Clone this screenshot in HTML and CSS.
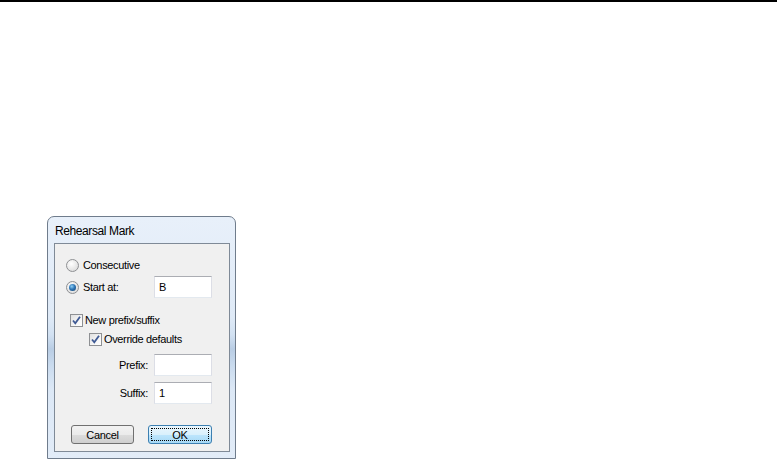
FILE: index.html
```html
<!DOCTYPE html>
<html>
<head>
<meta charset="utf-8">
<link rel="stylesheet" href="styles.css">
</head>
<body>
<div class="topline"></div>
<div class="dialog">
  <div class="title">Rehearsal Mark</div>
  <div class="client">
    <div class="row r1"><span class="radio"></span><span class="lbl">Consecutive</span></div>
    <div class="row r2">
      <div class="opt"><span class="radio on"></span><span class="lbl">Start at:</span></div>
      <span class="field">B</span>
    </div>
    <div class="row r3"><span class="check"><svg width="11" height="11" viewBox="0 0 11 11"><path d="M2 5.5 L4.3 8.3 L9 1.8" fill="none" stroke="#3f5a94" stroke-width="1.8"/></svg></span><span class="lbl">New prefix/suffix</span></div>
    <div class="row r4"><span class="check"><svg width="11" height="11" viewBox="0 0 11 11"><path d="M2 5.5 L4.3 8.3 L9 1.8" fill="none" stroke="#3f5a94" stroke-width="1.8"/></svg></span><span class="lbl">Override defaults</span></div>
    <div class="row r5"><span class="plabel">Prefix:</span><span class="field"></span></div>
    <div class="row r6"><span class="plabel">Suffix:</span><span class="field">1</span></div>
    <div class="buttons">
      <span class="btn">Cancel</span>
      <span class="btn ok"><span class="focus">OK</span></span>
    </div>
  </div>
</div>
</body>
</html>
```

FILE: styles.css
```css
html, body {
  margin: 0;
  padding: 0;
  background: #ffffff;
}
body {
  width: 783px;
  height: 459px;
  overflow: hidden;
  font-family: "Liberation Sans", Arial, sans-serif;
  font-size: 11px;
  color: #000;
}
.topline {
  width: 777px;
  height: 2px;
  background: #000;
}
.dialog {
  box-sizing: border-box;
  width: 189px;
  height: 243px;
  margin: 214px 0 0 47px;
  border: 1px solid #6f7c8c;
  border-radius: 7px 7px 0 0;
  padding: 0 5px 0 6px;
  background: linear-gradient(to bottom, #e8f0fa 0px, #dfeaf7 100px, #d2e1f2 118px, #b9cde4 132px, #cbdcef 150px, #dce8f6 172px, #e2ecf8 243px);
  display: flex;
  flex-direction: column;
}
.title {
  height: 26px;
  line-height: 26px;
  padding: 1px 0 0 1px;
  box-sizing: border-box;
  font-size: 12px;
  letter-spacing: -0.4px;
  color: #000;
}
.client {
  box-sizing: border-box;
  width: 176px;
  height: 209px;
  border: 1px solid #7f8a97;
  background: #f0f0f0;
  display: flex;
  flex-direction: column;
  padding: 12px 0 0 0;
}
.row {
  display: flex;
  align-items: center;
}
.lbl {
  letter-spacing: -0.35px;
}
.r1 {
  height: 18px;
  padding-left: 11px;
}
.r2 {
  height: 22px;
  margin-top: 2px;
}
.opt {
  display: flex;
  align-items: center;
  width: 99px;
  padding-left: 11px;
  box-sizing: border-box;
}
.radio {
  box-sizing: border-box;
  width: 13px;
  height: 13px;
  border-radius: 50%;
  border: 1px solid #8e9093;
  background: radial-gradient(circle at 40% 35%, #ffffff 0, #eeeeee 40%, #d4d4d4 100%);
  margin-right: 4px;
  position: relative;
  flex: none;
}
.radio.on::after {
  content: "";
  position: absolute;
  left: 2px;
  top: 2px;
  width: 7px;
  height: 7px;
  border-radius: 50%;
  background: radial-gradient(circle at 40% 35%, #8fd0f5 0, #2f77b8 45%, #123a63 100%);
}
.field {
  box-sizing: border-box;
  width: 58px;
  height: 22px;
  background: #ffffff;
  border: 1px solid #dcdee6;
  border-top-color: #abadb3;
  border-bottom-color: #e3e9ef;
  padding: 3px 0 0 4px;
  line-height: 14px;
  font-size: 11px;
}
.r3 {
  height: 16px;
  margin-top: 14px;
  padding-left: 15px;
}
.r4 {
  height: 16px;
  margin-top: 3px;
  padding-left: 34px;
}
.check {
  box-sizing: border-box;
  width: 13px;
  height: 13px;
  border: 1px solid #8e9093;
  background: linear-gradient(135deg, #e0e0e0 0, #f6f6f6 60%, #ffffff 100%);
  margin-right: 2px;
  display: flex;
  align-items: center;
  justify-content: center;
  flex: none;
}
.check svg {
  display: block;
}
.r5 {
  height: 22px;
  margin-top: 7px;
}
.r6 {
  height: 22px;
  margin-top: 6px;
}
.plabel {
  width: 93px;
  text-align: right;
  margin-right: 6px;
  letter-spacing: -0.3px;
}
.buttons {
  display: flex;
  margin-top: 21px;
  padding-left: 16px;
  gap: 14px;
}
.btn {
  box-sizing: border-box;
  width: 63px;
  height: 19px;
  border: 1px solid #707070;
  border-radius: 3px;
  background: linear-gradient(to bottom, #f2f2f2 0, #ebebeb 50%, #dddddd 50%, #cfcfcf 100%);
  display: flex;
  align-items: center;
  justify-content: center;
  letter-spacing: -0.3px;
}
.btn.ok {
  width: 64px;
  border-color: #3c7fb1;
  background: linear-gradient(to bottom, #eaf6fd 0, #d9f0fc 50%, #bee6fd 50%, #a7d9f5 100%);
  padding: 2px;
}
.focus {
  box-sizing: border-box;
  width: 100%;
  height: 100%;
  border: 1px dotted #000;
  display: flex;
  align-items: center;
  justify-content: center;
}
```
